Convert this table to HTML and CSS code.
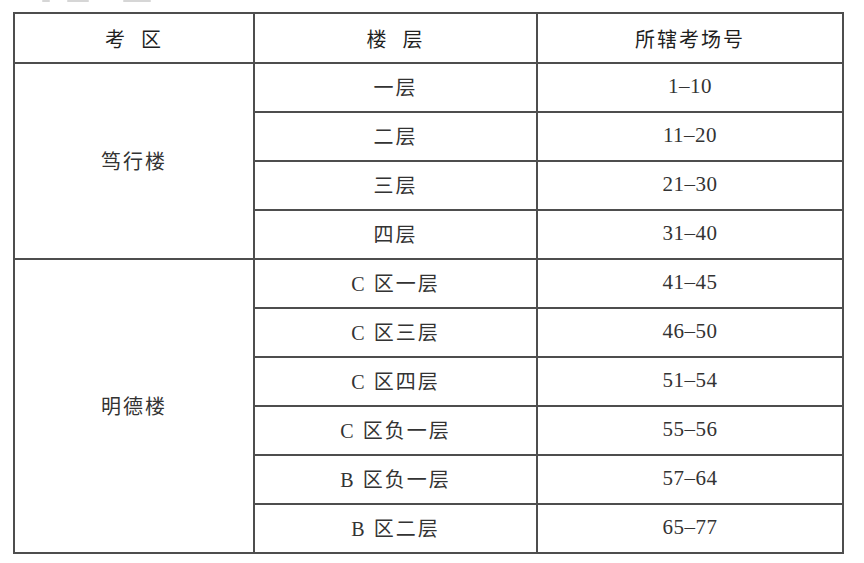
FILE: index.html
```html
<!DOCTYPE html>
<html lang="zh-CN">
<head>
<meta charset="utf-8">
<title>考场分布</title>
<link rel="stylesheet" href="styles.css">
</head>
<body>
<div class="page">
  <div class="cut" aria-hidden="true">
    <span class="frag f1"></span>
    <span class="frag f2"></span>
    <span class="frag f3"></span>
  </div>
  <div class="sheet">
    <div class="cell head zh-head">考&nbsp;&nbsp;区</div>
    <div class="cell head zh-head">楼&nbsp;&nbsp;层</div>
    <div class="cell head zh-head">所辖考场号</div>

    <div class="cell zh bld span4">笃行楼</div>
    <div class="cell zh">一层</div><div class="cell num">1–10</div>
    <div class="cell zh">二层</div><div class="cell num">11–20</div>
    <div class="cell zh">三层</div><div class="cell num">21–30</div>
    <div class="cell zh">四层</div><div class="cell num">31–40</div>

    <div class="cell zh bld span6">明德楼</div>
    <div class="cell zh">C 区一层</div><div class="cell num">41–45</div>
    <div class="cell zh">C 区三层</div><div class="cell num">46–50</div>
    <div class="cell zh">C 区四层</div><div class="cell num">51–54</div>
    <div class="cell zh">C 区负一层</div><div class="cell num">55–56</div>
    <div class="cell zh">B 区负一层</div><div class="cell num">57–64</div>
    <div class="cell zh">B 区二层</div><div class="cell num">65–77</div>
  </div>
</div>
</body>
</html>
```

FILE: styles.css
```css
html, body {
  margin: 0;
  padding: 0;
  background: #ffffff;
}

.page {
  width: 864px;
  height: 563px;
  padding-left: 13px;
  box-sizing: border-box;
  overflow: hidden;
}

.cut {
  height: 4px;
  display: flex;
  align-items: flex-start;
  padding-left: 29px;
  gap: 0;
}

.frag {
  display: block;
  height: 2px;
  background: #d6d6d6;
  border-radius: 1px;
}

.f1 { width: 8px; }
.f2 { width: 22px; margin-left: 17px; }
.f3 { width: 28px; margin-left: 34px; }

.sheet {
  margin-top: 8px;
  display: grid;
  grid-template-columns: 238px 281px 304px;
  grid-template-rows: 48px repeat(10, 47px);
  gap: 2px;
  padding: 2px;
  width: 831px;
  box-sizing: border-box;
  background: #4e4e4e;
}

.cell {
  background: #ffffff;
  display: flex;
  align-items: center;
  justify-content: center;
  color: #333333;
  white-space: pre;
}

.zh,
.zh-head {
  font-family: "Liberation Serif", "Noto Sans CJK SC", serif;
  font-size: 20px;
  letter-spacing: 2px;
  padding-bottom: 2px;
}

.zh-head {
  color: #1f1f1f;
  padding-bottom: 0;
}

.num {
  font-family: "Liberation Serif", serif;
  font-size: 21px;
  letter-spacing: 0.5px;
  color: #333333;
  padding-bottom: 3px;
}

.span4 {
  grid-row: span 4;
}

.span6 {
  grid-row: span 6;
}
```
